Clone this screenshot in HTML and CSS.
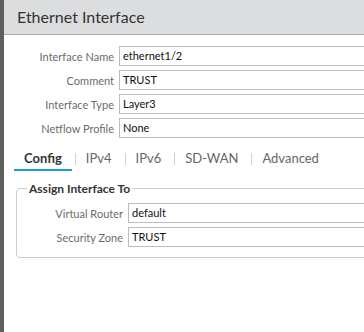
FILE: index.html
```html
<!DOCTYPE html>
<html lang="en">
<head>
    <meta charset="UTF-8">
    <meta name="viewport" content="width=device-width, initial-scale=1.0">
    <title>Ethernet Interface</title>
    <link rel="stylesheet" href="styles.css">
</head>
<body>
    <div class="frame">
        <div class="edge"></div>
        <div class="dialog">
            <div class="dialog-header">Ethernet Interface</div>

            <div class="dialog-body">
                <div class="form-row">
                    <label class="label">Interface Name</label>
                    <div class="field">ethernet1/2</div>
                </div>
                <div class="form-row">
                    <label class="label">Comment</label>
                    <div class="field">TRUST</div>
                </div>
                <div class="form-row">
                    <label class="label">Interface Type</label>
                    <div class="field">Layer3</div>
                </div>
                <div class="form-row">
                    <label class="label">Netflow Profile</label>
                    <div class="field">None</div>
                </div>

                <div class="tabs">
                    <div class="tab active">Config</div>
                    <span class="tab-sep"></span>
                    <div class="tab">IPv4</div>
                    <span class="tab-sep"></span>
                    <div class="tab">IPv6</div>
                    <span class="tab-sep"></span>
                    <div class="tab">SD-WAN</div>
                    <span class="tab-sep"></span>
                    <div class="tab">Advanced</div>
                </div>

                <fieldset class="group">
                    <legend>Assign Interface To</legend>
                    <div class="form-row">
                        <label class="label label-inner">Virtual Router</label>
                        <div class="field">default</div>
                    </div>
                    <div class="form-row">
                        <label class="label label-inner">Security Zone</label>
                        <div class="field">TRUST</div>
                    </div>
                </fieldset>
            </div>
        </div>
    </div>
</body>
</html>
```

FILE: styles.css
```css
body {
    margin: 0;
    font-family: Lato, "Liberation Sans", sans-serif;
    background-color: #fff;
    overflow: hidden;
}
.frame {
    display: flex;
    height: 332px;
}
.edge {
    width: 4px;
    flex-shrink: 0;
    background-color: #5f5f5f;
}
.dialog {
    width: 480px;
    flex-shrink: 0;
    background-color: #fff;
}
.dialog-header {
    height: 34px;
    line-height: 34px;
    padding-left: 13px;
    background-color: #dcdddf;
    border-bottom: 1px solid #a9a9a9;
    font-size: 16px;
    color: #333;
}
.dialog-body {
    padding-top: 11px;
}
.form-row {
    display: flex;
    align-items: center;
    margin-bottom: 4px;
}
.label {
    width: 115px;
    padding-right: 5px;
    box-sizing: border-box;
    text-align: right;
    font-size: 11px;
    color: #6b6b6b;
}
.label-inner {
    width: 101px;
}
.field {
    width: 340px;
    height: 20px;
    line-height: 18px;
    box-sizing: border-box;
    border: 1px solid #bdbdbd;
    padding: 0 3px;
    font-size: 11px;
    color: #111;
}
.tabs {
    display: flex;
    align-items: center;
    margin: 9px 0 0 10px;
}
.tab {
    padding: 0 10px;
    line-height: 22px;
    font-size: 13px;
    color: #666;
    border-bottom: 2px solid transparent;
}
.tab.active {
    font-weight: bold;
    color: #333;
    border-bottom-color: #1a9ae0;
}
.tab-sep {
    width: 1px;
    height: 12px;
    margin-left: 3px;
    background-color: #cfcfcf;
}
.group {
    margin: 10px 0 0 12px;
    padding: 7px 10px 6px;
    border: 1px solid #cccccc;
    border-radius: 4px;
}
.group legend {
    padding: 0 2px;
    font-size: 12px;
    font-weight: bold;
    color: #333;
}
```
